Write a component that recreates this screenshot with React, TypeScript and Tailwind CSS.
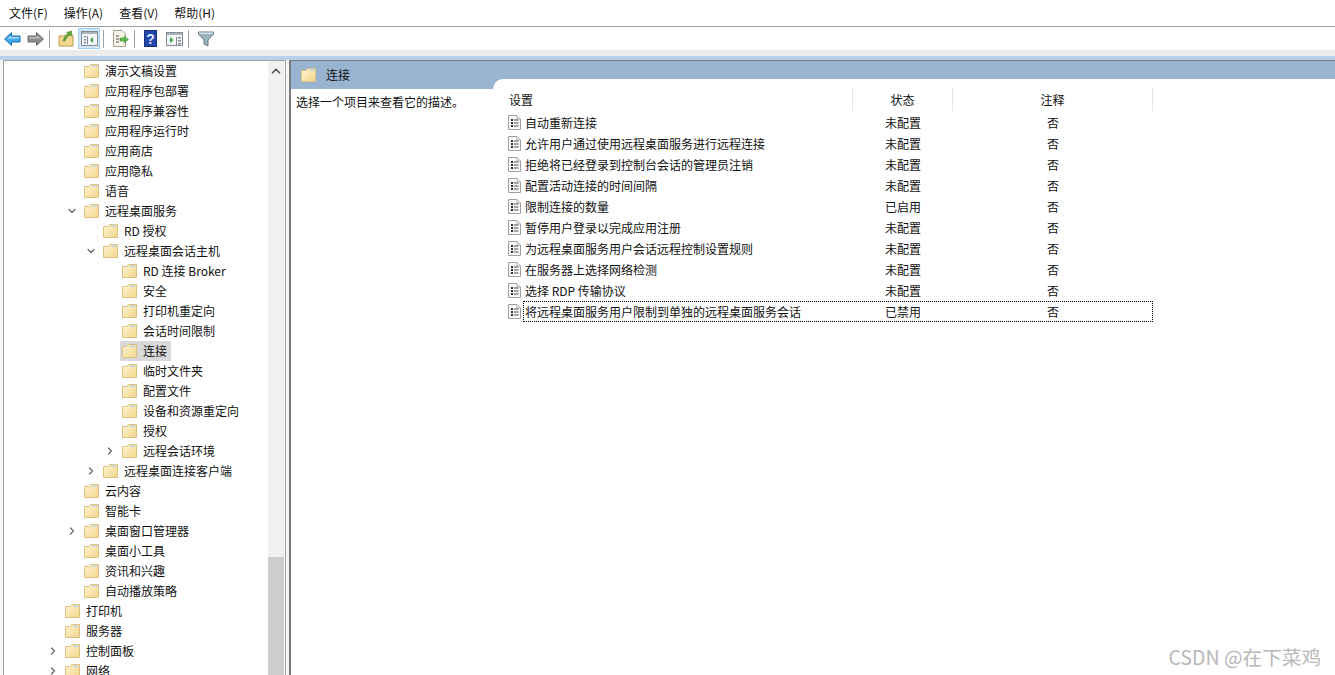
import { ChevronDown, ChevronRight, ChevronUp } from "lucide-react";

const font = "font-['Noto_Sans_CJK_SC','Noto_Sans',sans-serif]";

function FolderIcon() {
  return (
    <svg width="16" height="14" viewBox="0 0 16 14" className="shrink-0">
      <defs>
        <linearGradient id="fold" x1="0" y1="0" x2="1" y2="1">
          <stop offset="0" stopColor="#fff6d2" />
          <stop offset="1" stopColor="#f3d48c" />
        </linearGradient>
      </defs>
      <path d="M0.5 2.5 L0.5 13.5 L14.5 13.5 L14.5 0.5 L6.5 0.5 L5 2.5 Z" fill="url(#fold)" stroke="#dcc080" />
      <path d="M8 1.5 L13.5 1.5 L13.5 3 L8 3 Z" fill="#b9d2e6" />
    </svg>
  );
}

function DocIcon() {
  return (
    <svg width="13" height="15" viewBox="0 0 13 15" className="shrink-0">
      <path d="M0.5 0.5 H9 L12.5 4 V14.5 H0.5 Z" fill="#fbfbfb" stroke="#a0a0a0" />
      <path d="M9 0.5 V4 H12.5" fill="#e4e4e4" stroke="#b8b8b8" />
      <path d="M3 4h2v2h-2zM3 7h2v2h-2zM3 10h2v2h-2z" fill="#2f2f2f" />
      <path d="M6 5h4.5M6 8h4.5M6 11h4.5" stroke="#4a4a4a" />
    </svg>
  );
}

function Toolbar() {
  const sep = <div className="w-px h-[18px] bg-[#a0a0a0]" />;
  return (
    <div className="h-[23px] flex items-center bg-white">
      <svg width="17" height="14" viewBox="0 0 17 14" className="ml-1">
        <path d="M0.5 7 L7.5 0.5 V4 H16 V10 H7.5 V13.5 Z" fill="#3fa9ee" stroke="#1f6fb5" />
        <path d="M3 7 L7 3.5 V5 H15 V6.5 H6 Z" fill="#a9dcfa" />
      </svg>
      <svg width="17" height="14" viewBox="0 0 17 14" className="ml-1.5">
        <path d="M16.5 7 L9.5 0.5 V4 H1 V10 H9.5 V13.5 Z" fill="#8e8e8e" stroke="#6a6a6a" />
        <path d="M2 5 H10 V3.5 L14 6.5 H2 Z" fill="#bdbdbd" />
      </svg>
      <div className="ml-[5px]">{sep}</div>
      <svg width="16" height="17" viewBox="0 0 16 17" className="ml-2">
        <path d="M1 6 H6 L7 5 H15 V16 H1 Z" fill="#f3d88f" stroke="#b89a50" />
        <path d="M5 11 C6 7 8 5 10 4 L8.5 2.5 L13.5 1 L13.5 6 L12 4.8 C10 6 8 8 7 11 Z" fill="#5aa63c" stroke="#3f7f28" strokeWidth="0.5" />
      </svg>
      <div className="ml-1 w-[22px] h-[21px] bg-[#d5e8f9] border border-[#9ecdf4] flex items-center justify-center">
        <svg width="17" height="15" viewBox="0 0 17 15">
          <rect x="0.5" y="0.5" width="16" height="14" fill="#f4f6f8" stroke="#7f8c96" />
          <rect x="1" y="1" width="15" height="2" fill="#a9b4bd" />
          <path d="M3 5h2v1.5h-2zM3 8h2v1.5h-2zM3 11h2v1.5h-2zM6 5h1v8h-1z" fill="#7f8c96" />
          <path d="M12 6 V12 L9 9 Z" fill="#35a04a" />
        </svg>
      </div>
      <div className="ml-[3px]">{sep}</div>
      <svg width="17" height="17" viewBox="0 0 17 17" className="ml-2">
        <path d="M1.5 0.5 H10 L13.5 4 V16.5 H1.5 Z" fill="#f8f5e8" stroke="#a8a08c" />
        <path d="M4 6h3M4 9h3M4 12h3" stroke="#555" />
        <path d="M8 8 H12 V6 L16.5 9.5 L12 13 V11 H8 Z" fill="#58b548" stroke="#3f8f33" strokeWidth="0.5" />
      </svg>
      <div className="ml-[5px]">{sep}</div>
      <div className="ml-[9px] w-[13px] h-[17px] bg-[#2347a8] border border-[#16307a] flex items-center justify-center text-[#dfe8ff] text-[14px] font-bold leading-none font-['Liberation_Sans',sans-serif]">?</div>
      <svg width="17" height="14" viewBox="0 0 17 14" className="ml-[9px]">
        <rect x="0.5" y="0.5" width="16" height="13" fill="#f4f6f8" stroke="#7f8c96" />
        <rect x="1" y="1" width="15" height="2" fill="#a9b4bd" />
        <path d="M4 5 V11 L7.5 8 Z" fill="#35a04a" />
        <path d="M10 5h1v8h-1zM12 5h3v1.5h-3zM12 8h3v1.5h-3zM12 11h3v1.5h-3z" fill="#7f8c96" />
      </svg>
      <div className="ml-[5px]">{sep}</div>
      <svg width="16" height="16" viewBox="0 0 16 16" className="ml-[9px]">
        <path d="M0.5 1 H15.5 V3 L10 9 V15 L6 13 V9 L0.5 3 Z" fill="#9ab3bf" stroke="#5f7985" />
        <path d="M1 1.5 H15 V3 H1 Z" fill="#d6e2e8" />
      </svg>
    </div>
  );
}

type Row = { label: string; pad: string; arrow?: "open" | "closed"; selected?: boolean };

const treeRows: Row[] = [
  { label: "演示文稿设置", pad: "pl-[80px]" },
  { label: "应用程序包部署", pad: "pl-[80px]" },
  { label: "应用程序兼容性", pad: "pl-[80px]" },
  { label: "应用程序运行时", pad: "pl-[80px]" },
  { label: "应用商店", pad: "pl-[80px]" },
  { label: "应用隐私", pad: "pl-[80px]" },
  { label: "语音", pad: "pl-[80px]" },
  { label: "远程桌面服务", pad: "pl-[80px]", arrow: "open" },
  { label: "RD 授权", pad: "pl-[99px]" },
  { label: "远程桌面会话主机", pad: "pl-[99px]", arrow: "open" },
  { label: "RD 连接 Broker", pad: "pl-[118px]" },
  { label: "安全", pad: "pl-[118px]" },
  { label: "打印机重定向", pad: "pl-[118px]" },
  { label: "会话时间限制", pad: "pl-[118px]" },
  { label: "连接", pad: "pl-[118px]", selected: true },
  { label: "临时文件夹", pad: "pl-[118px]" },
  { label: "配置文件", pad: "pl-[118px]" },
  { label: "设备和资源重定向", pad: "pl-[118px]" },
  { label: "授权", pad: "pl-[118px]" },
  { label: "远程会话环境", pad: "pl-[118px]", arrow: "closed" },
  { label: "远程桌面连接客户端", pad: "pl-[99px]", arrow: "closed" },
  { label: "云内容", pad: "pl-[80px]" },
  { label: "智能卡", pad: "pl-[80px]" },
  { label: "桌面窗口管理器", pad: "pl-[80px]", arrow: "closed" },
  { label: "桌面小工具", pad: "pl-[80px]" },
  { label: "资讯和兴趣", pad: "pl-[80px]" },
  { label: "自动播放策略", pad: "pl-[80px]" },
  { label: "打印机", pad: "pl-[61px]" },
  { label: "服务器", pad: "pl-[61px]" },
  { label: "控制面板", pad: "pl-[61px]", arrow: "closed" },
  { label: "网络", pad: "pl-[61px]", arrow: "closed" },
];

const settings = [
  ["自动重新连接", "未配置"],
  ["允许用户通过使用远程桌面服务进行远程连接", "未配置"],
  ["拒绝将已经登录到控制台会话的管理员注销", "未配置"],
  ["配置活动连接的时间间隔", "未配置"],
  ["限制连接的数量", "已启用"],
  ["暂停用户登录以完成应用注册", "未配置"],
  ["为远程桌面服务用户会话远程控制设置规则", "未配置"],
  ["在服务器上选择网络检测", "未配置"],
  ["选择 RDP 传输协议", "未配置"],
  ["将远程桌面服务用户限制到单独的远程桌面服务会话", "已禁用"],
];

function TreeRow({ row }: { row: Row }) {
  return (
    <div className={`h-5 flex items-center ${row.pad}`}>
      {row.arrow && (
        <span className="w-3 -ml-[18px] mr-1.5 flex justify-center text-[#666]">
          {row.arrow === "open" ? <ChevronDown size={14} strokeWidth={2.5} /> : <ChevronRight size={14} strokeWidth={2.5} />}
        </span>
      )}
      <span className={`h-5 -ml-[2px] pl-[2px] pr-1 flex items-center whitespace-nowrap ${row.selected ? "bg-[#d9d9d9]" : ""}`}>
        <FolderIcon />
        <span className="ml-[5px]">{row.label}</span>
      </span>
    </div>
  );
}

export default function App() {
  return (
    <div className={`relative h-screen overflow-hidden flex flex-col bg-white text-[12px] text-[#111] ${font}`}>
      <div className="h-[26px] flex items-center gap-[16px] pl-[9px] border-b border-[#a0a0a0] box-content">
        <span>文件(F)</span>
        <span>操作(A)</span>
        <span>查看(V)</span>
        <span>帮助(H)</span>
      </div>
      <Toolbar />
      <div className="h-[6px] bg-[#ececec]" />
      <div className="h-[4px] bg-[#b9d1ea]" />

      <div className="flex-1 min-h-0 flex bg-[#f5f5f5]">
        <div className="ml-[3px] w-[283px] flex bg-white border-l border-t border-r border-[#a0a0a0]">
          <div className="w-[264px] overflow-hidden">
            {treeRows.map((r) => (
              <TreeRow key={r.label} row={r} />
            ))}
          </div>
          <div className="w-[16px] bg-[#f0f0f0] flex flex-col">
            <div className="h-[496px] pt-[3px] flex justify-center text-[#555]">
              <ChevronUp size={14} strokeWidth={3} />
            </div>
            <div className="flex-1 bg-[#cdcdcd]" />
          </div>
        </div>

        <div className="ml-[3px] flex-1 min-w-0 flex border-l-2 border-t border-[#7a7a7a] bg-white">
          <div className="w-[202px] shrink-0">
            <div className="h-[28px] bg-[#99b4d1] flex items-center pl-[10px] gap-[9px]">
              <FolderIcon />
              <span>连接</span>
            </div>
            <div className="pl-[5px] pt-[4px]">选择一个项目来查看它的描述。</div>
          </div>
          <div className="flex-1 flex flex-col bg-[#99b4d1]">
            <div className="h-[18px] shrink-0" />
            <div className="flex-1 bg-white rounded-tl-[10px] pl-[12px]">
              <div className="h-[23px] flex items-center w-[648px] mt-[9px]">
                <div className="w-[348px] pl-[4px] h-full flex items-center border-r border-[#e5e5e5]">设置</div>
                <div className="w-[100px] h-full flex items-center justify-center border-r border-[#e5e5e5]">状态</div>
                <div className="w-[200px] h-full flex items-center justify-center border-r border-[#e5e5e5]">注释</div>
              </div>
              <div className="mt-[1px] w-[648px]">
                {settings.map(([name, state], i) => (
                  <div key={name} className="relative h-[21px] flex items-center">
                    <div className="w-[348px] flex items-center pl-[3px] h-full">
                      <DocIcon />
                      <span className="ml-[4px]">{name}</span>
                    </div>
                    <div className="w-[100px] pl-[32px]">{state}</div>
                    <div className="w-[200px] pl-[94px]">否</div>
                    {i === 9 && (
                      <div className="absolute left-[18px] right-0 inset-y-0 outline-1 outline-dotted outline-black -outline-offset-1" />
                    )}
                  </div>
                ))}
              </div>
            </div>
          </div>
        </div>
      </div>

      <div className="absolute right-[14px] bottom-[4px] text-[19.6px] leading-7 text-[#b8b8b8]">CSDN @在下菜鸡</div>
    </div>
  );
}
